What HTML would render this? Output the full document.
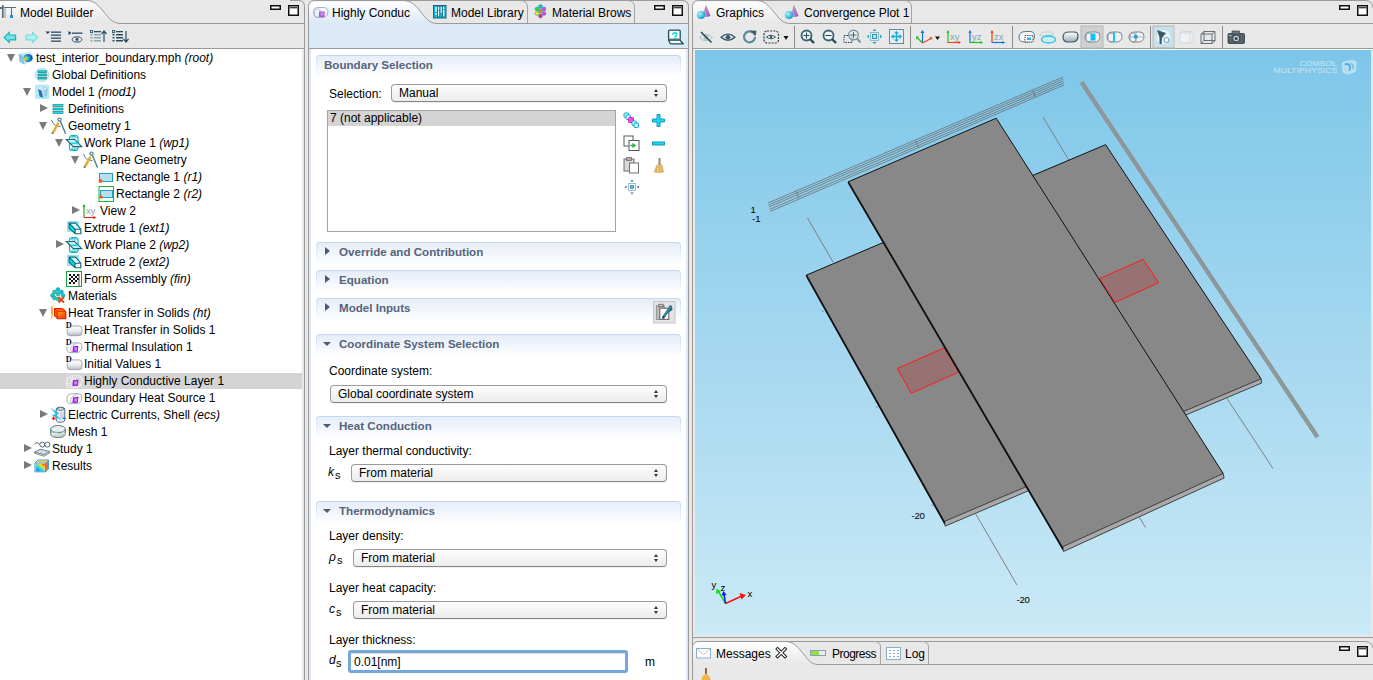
<!DOCTYPE html><html><head><meta charset="utf-8"><style>*{margin:0;padding:0;box-sizing:border-box}
html,body{width:1373px;height:680px;overflow:hidden;background:#e8e8e8;font-family:"Liberation Sans",sans-serif;font-size:12px;color:#000;position:relative}
.a{position:absolute}
svg.a{overflow:visible}
.t{position:absolute;white-space:pre;line-height:17px;font-size:12px}
.i{font-style:italic}
.line{position:absolute;background:#9a9a9a}
.tri-d{position:absolute;width:0;height:0;border-left:4.75px solid transparent;border-right:4.75px solid transparent;border-top:8px solid #7a7a7a}
.tri-r{position:absolute;width:0;height:0;border-top:4.6px solid transparent;border-bottom:4.6px solid transparent;border-left:8px solid #7a7a7a}
.sec{position:absolute;left:316px;width:365px;height:22px;border-radius:4px 4px 0 0;background:linear-gradient(#c3d6f2,rgba(200,218,244,0.6) 40%,rgba(255,255,255,0))}
.sec .in{position:absolute;left:1px;top:1px;right:1px;bottom:0;border-radius:3px 3px 0 0;background:linear-gradient(#e6edf8,#fdfeff)}
.sec .h{position:absolute;left:23px;top:1px;font-weight:bold;font-size:11.6px;color:#55647c;line-height:17px;white-space:pre}
.sec .ar{position:absolute;left:8.5px;top:5px;width:0;height:0;border-top:4.5px solid transparent;border-bottom:4.5px solid transparent;border-left:5px solid #4a5a70}
.sec .ad{position:absolute;left:6.5px;top:8px;width:0;height:0;border-left:4px solid transparent;border-right:4px solid transparent;border-top:4px solid #4a5a70}
.combo{position:absolute;height:18px;border:1px solid #9b9b9b;border-bottom-color:#858585;border-radius:4px;background:linear-gradient(#fdfdfd,#ececec);box-shadow:0 1px 0 rgba(0,0,0,0.06)}
.combo span{position:absolute;left:7px;top:0;line-height:16px;font-size:12px;white-space:pre}
.combo i{position:absolute;right:7px;top:3px;font-style:normal;width:5px;height:10px}
.combo i:before{content:"";position:absolute;left:0;top:1px;border-left:2.5px solid transparent;border-right:2.5px solid transparent;border-bottom:3px solid #333}
.combo i:after{content:"";position:absolute;left:0;top:6px;border-left:2.5px solid transparent;border-right:2.5px solid transparent;border-top:3px solid #333}
.lbl{position:absolute;white-space:pre;font-size:12px;line-height:17px}
.sym{position:absolute;font-style:italic;font-size:12px;line-height:17px;white-space:pre}
.t,.lbl,.sym{margin-top:1px}
</style></head><body>
<svg class="a" style="left:0px;top:0px" width="304" height="24" viewBox="0 0 304 24" ><defs><linearGradient id="gtab" x1="0" y1="0" x2="0" y2="1"><stop offset="0" stop-color="#fbfbfb"/><stop offset="1" stop-color="#e6e6e6"/></linearGradient></defs><path d="M0 1 H86 C94 1 97 4 103 11 C109 18 112 23 121 23 V24 H0Z" fill="url(#gtab)"/><rect x="121" y="1" width="177" height="22" fill="#e8e8e8"/><path d="M0 0.5 H86 C94 0.5 97 4 103 11 C109 18 112 23.5 121 23.5 H304" fill="none" stroke="#999" stroke-width="1"/></svg>
<svg class="a" style="left:0px;top:3px" width="19" height="17" viewBox="0 0 19 17" ><rect x="2" y="2" width="1.6" height="13" fill="#5a6a78"/><rect x="0" y="4" width="2" height="2" fill="#5a6a78"/><rect x="2" y="4" width="14" height="1" fill="#5a6a78"/><rect x="11" y="5" width="1" height="7" fill="#5a6a78"/><rect x="10" y="12" width="3" height="3" fill="#1890e0"/><rect x="4.5" y="4" width="1" height="11" fill="#8a9aa8"/></svg>
<div class="t" style="left:20px;top:4px">Model Builder</div>
<svg class="a" style="left:270px;top:5px" width="11" height="5" viewBox="0 0 11 5"><rect x="0.75" y="0.75" width="9.5" height="3.5" fill="#fff" stroke="#111" stroke-width="1.5"/></svg><svg class="a" style="left:288px;top:5px" width="11" height="11" viewBox="0 0 11 11"><rect x="0.75" y="0.75" width="9.5" height="9.5" fill="#fff" stroke="#111" stroke-width="1.5"/><rect x="2" y="2.2" width="7" height="1.1" fill="#111"/></svg>
<svg class="a" style="left:3px;top:31px" width="15" height="13" viewBox="0 0 15 13" ><path d="M1.2 6.4 L6.2 1.4 L6.2 4 L12.6 4 L12.6 8.8 L6.2 8.8 L6.2 11.4 Z" fill="#7ee0e0" stroke="#10b8b8" stroke-width="1.2"/></svg>
<svg class="a" style="left:25px;top:31px" width="15" height="13" viewBox="0 0 15 13" ><path d="M12.6 6.4 L7.6 1.4 L7.6 4 L1.2 4 L1.2 8.8 L7.6 8.8 L7.6 11.4 Z" fill="#b4eeee" stroke="#78dcdc" stroke-width="1.2"/></svg>
<svg class="a" style="left:45px;top:30px" width="18" height="14" viewBox="0 0 18 14" ><path d="M0.5 1.5 H5 L2.75 4Z" fill="#1a3a6a"/><g fill="#2a4a68"><rect x="6" y="1.5" width="10" height="1.3"/><rect x="6" y="4.5" width="10" height="1.3"/><rect x="6" y="7.5" width="10" height="1.3"/><rect x="6" y="10.5" width="10" height="1.3"/></g></svg>
<svg class="a" style="left:68px;top:30px" width="16" height="14" viewBox="0 0 16 14" ><path d="M0.5 1 V5 L3.5 3Z" fill="#1a3a6a"/><rect x="4" y="2.5" width="10.5" height="1.3" fill="#2a4a68"/><ellipse cx="9" cy="9.5" rx="4.8" ry="2.6" fill="none" stroke="#2a4a68" stroke-width="1"/><circle cx="9" cy="9.5" r="1.4" fill="#2a4a68"/></svg>
<svg class="a" style="left:90px;top:30px" width="18" height="14" viewBox="0 0 18 14" ><g fill="#2a5060"><rect x="0.5" y="0.5" width="2.2" height="2.2" fill="none" stroke="#2a5060" stroke-width="0.8"/><rect x="4" y="1" width="7" height="1.3"/></g><g fill="#8aa4b0"><rect x="0.5" y="4" width="2" height="1.5"/><rect x="4" y="4" width="7" height="1.5"/><rect x="0.5" y="7" width="2" height="1.5"/><rect x="4" y="7" width="7" height="1.5"/><rect x="0.5" y="10" width="2" height="1.5"/><rect x="4" y="10" width="7" height="1.5"/></g><path d="M14 12 V1.5 M11.5 4 L14 1 L16.5 4" stroke="#2a5060" stroke-width="1.2" fill="none"/></svg>
<svg class="a" style="left:112px;top:30px" width="18" height="14" viewBox="0 0 18 14" ><g fill="#2a4a60"><rect x="0.5" y="0.5" width="2.2" height="2.2" fill="none" stroke="#2a4a60" stroke-width="0.8"/><rect x="4" y="1" width="7" height="1.3"/><rect x="0.5" y="4" width="2" height="1.5"/><rect x="4" y="4" width="7" height="1.5"/><rect x="0.5" y="7" width="2" height="1.5"/><rect x="4" y="7" width="7" height="1.5"/><rect x="0.5" y="10" width="2" height="1.5"/><rect x="4" y="10" width="7" height="1.5"/></g><path d="M14 1 V11.5 M11.5 9 L14 12 L16.5 9" stroke="#2a4a60" stroke-width="1.2" fill="none"/></svg>
<div class="line" style="left:0;top:48px;width:304px;height:1px"></div>
<div class="a" style="left:0;top:49px;width:302px;height:631px;background:#fff"></div>
<div class="tri-d" style="left:7px;top:54px"></div>
<svg class="a" style="left:18px;top:49px" width="16" height="17" viewBox="0 0 16 17" ><defs><linearGradient id="r0gc0" x1="0" y1="0" x2="1" y2="1"><stop offset="0" stop-color="#9cd0ee"/><stop offset="0.5" stop-color="#e0f2fc"/><stop offset="1" stop-color="#7ac0ea"/></linearGradient><radialGradient id="r0gsw" cx="0.3" cy="0.55" r="0.7"><stop offset="0" stop-color="#f8d040"/><stop offset="0.3" stop-color="#40d080"/><stop offset="0.55" stop-color="#1890e0"/><stop offset="1" stop-color="#0a3aa0"/></radialGradient></defs>
<path d="M0.5 5.2 L13.5 2.2 L15.5 10.5 L6.5 15.5 L1.5 13 Z" fill="url(#r0gc0)"/><path d="M0.5 5.2 L5 7 L6.5 15.5 L1.5 13Z" fill="#6aaedc" opacity="0.7"/>
<ellipse cx="10" cy="9" rx="4.6" ry="4" fill="url(#r0gsw)"/><circle cx="6.5" cy="10.5" r="1.3" fill="#e8c840"/></svg>
<div class="t" style="left:36px;top:49px">test_interior_boundary.mph <span class="i">(root)</span></div>
<svg class="a" style="left:34px;top:66px" width="16" height="17" viewBox="0 0 16 17" ><circle cx="8" cy="8.8" r="6.8" fill="#c8ecec" stroke="#a8dcdc" stroke-width="0.8"/>
<rect x="4" y="4.8" width="8.5" height="1.8" fill="#00ecec" stroke="#206a70" stroke-width="0.6"/><rect x="4" y="8" width="8.5" height="1.8" fill="#00ecec" stroke="#206a70" stroke-width="0.6"/><rect x="4" y="11.2" width="8.5" height="1.8" fill="#00ecec" stroke="#206a70" stroke-width="0.6"/></svg>
<div class="t" style="left:52px;top:66px">Global Definitions</div>
<div class="tri-d" style="left:23px;top:88px"></div>
<svg class="a" style="left:34px;top:83px" width="16" height="17" viewBox="0 0 16 17" ><defs><linearGradient id="r2gm" x1="0" y1="0" x2="1" y2="0"><stop offset="0" stop-color="#f0f8fc"/><stop offset="1" stop-color="#88c4e4"/></linearGradient></defs>
<rect x="1" y="1.8" width="14.2" height="14.2" rx="1.5" fill="#b4eaf4"/><path d="M4 5.5 L9 3.8 L13.5 4.5 L13 13 L9 14.5 L5.5 14 Z" fill="url(#r2gm)"/><path d="M4 6 L7.5 7.5 L9 14.8 L5.5 13.5Z" fill="#1a78b8"/><path d="M7.5 7.5 L13.5 4.5" stroke="#d8f0fa" stroke-width="1"/></svg>
<div class="t" style="left:52px;top:83px">Model 1 <span class="i">(mod1)</span></div>
<div class="tri-r" style="left:40px;top:104px"></div>
<svg class="a" style="left:50px;top:100px" width="16" height="17" viewBox="0 0 16 17" ><rect x="3" y="4.6" width="10" height="2" fill="#00ecec" stroke="#206a70" stroke-width="0.6"/><rect x="3" y="8" width="10" height="2" fill="#00ecec" stroke="#206a70" stroke-width="0.6"/><rect x="3" y="11.4" width="10" height="2" fill="#00ecec" stroke="#206a70" stroke-width="0.6"/></svg>
<div class="t" style="left:68px;top:100px">Definitions</div>
<div class="tri-d" style="left:39px;top:122px"></div>
<svg class="a" style="left:50px;top:117px" width="16" height="17" viewBox="0 0 16 17" ><circle cx="9.5" cy="2.6" r="1.6" fill="none" stroke="#4f7e86" stroke-width="1.2"/><path d="M10.3 4 L15.6 16.8" stroke="#4f7e86" stroke-width="1.4" fill="none"/>
<path d="M1.6 2.8 Q3 9.5 10.5 9.6" stroke="#4f7e86" stroke-width="1" fill="none"/><path d="M2.6 16.4 L8.4 5.8" stroke="#f0b838" stroke-width="2.8"/><path d="M2.6 16.4 L8.4 5.8" stroke="#4f7e86" stroke-width="0.9" stroke-dasharray="0.8 2"/><path d="M2 17 L3 15" stroke="#4f7e86" stroke-width="1.3"/></svg>
<div class="t" style="left:68px;top:117px">Geometry 1</div>
<div class="tri-d" style="left:55px;top:139px"></div>
<svg class="a" style="left:66px;top:134px" width="16" height="17" viewBox="0 0 16 17" ><rect x="3.5" y="1.5" width="8.5" height="15" rx="2.5" fill="#fff" stroke="#10b4c4" stroke-width="1.2"/><ellipse cx="7.75" cy="3.2" rx="2.6" ry="0.9" fill="none" stroke="#10b4c4" stroke-width="0.9"/><ellipse cx="7.75" cy="14.8" rx="2.6" ry="0.9" fill="none" stroke="#10b4c4" stroke-width="0.9"/>
<path d="M0.3 5.5 L8.7 5.5 L15.8 12.6 L7.3 12.6 Z" fill="#c8f2f6" fill-opacity="0.85" stroke="#1a6a78" stroke-width="1.1"/><rect x="5" y="8.5" width="6" height="1.6" fill="#10d8e8"/></svg>
<div class="t" style="left:84px;top:134px">Work Plane 1 <span class="i">(wp1)</span></div>
<div class="tri-d" style="left:71px;top:156px"></div>
<svg class="a" style="left:82px;top:151px" width="16" height="17" viewBox="0 0 16 17" ><circle cx="9.5" cy="2.6" r="1.6" fill="none" stroke="#4f7e86" stroke-width="1.2"/><path d="M10.3 4 L15.6 16.8" stroke="#4f7e86" stroke-width="1.4" fill="none"/>
<path d="M1.6 2.8 Q3 9.5 10.5 9.6" stroke="#4f7e86" stroke-width="1" fill="none"/><path d="M2.6 16.4 L8.4 5.8" stroke="#f0b838" stroke-width="2.8"/><path d="M2.6 16.4 L8.4 5.8" stroke="#4f7e86" stroke-width="0.9" stroke-dasharray="0.8 2"/><path d="M2 17 L3 15" stroke="#4f7e86" stroke-width="1.3"/></svg>
<div class="t" style="left:100px;top:151px">Plane Geometry</div>
<svg class="a" style="left:98px;top:168px" width="16" height="17" viewBox="0 0 16 17" ><rect x="1.5" y="5.5" width="13" height="8" fill="#b8e0ec" stroke="#20a0c0" stroke-width="1"/><circle cx="2.5" cy="13" r="2" fill="#f06010"/></svg>
<div class="t" style="left:116px;top:168px">Rectangle 1 <span class="i">(r1)</span></div>
<svg class="a" style="left:98px;top:185px" width="16" height="17" viewBox="0 0 16 17" ><rect x="1" y="1.5" width="14.5" height="15" fill="none" stroke="#18b040" stroke-width="1"/><rect x="2.5" y="5.5" width="12" height="7" fill="#b8e0ec" stroke="#20a0c0" stroke-width="1"/><circle cx="3" cy="12" r="1.8" fill="#f06010"/></svg>
<div class="t" style="left:116px;top:185px">Rectangle 2 <span class="i">(r2)</span></div>
<div class="tri-r" style="left:72px;top:206px"></div>
<svg class="a" style="left:82px;top:202px" width="16" height="17" viewBox="0 0 16 17" ><path d="M2 15.5 V3" stroke="#20b020" stroke-width="1.2"/><path d="M0.5 5 L2 2 L3.5 5Z" fill="#20b020"/><path d="M2 15.5 H13" stroke="#e03010" stroke-width="1.2"/><path d="M11.5 14 L14.5 15.5 L11.5 17Z" fill="#e03010"/>
<text x="4" y="12" font-family="Liberation Sans" font-size="9.5" fill="#90a0a8">xy</text></svg>
<div class="t" style="left:100px;top:202px">View 2</div>
<svg class="a" style="left:66px;top:219px" width="16" height="17" viewBox="0 0 16 17" ><rect x="1" y="2" width="12" height="11" fill="#9ce2ec"/><path d="M3.2 4.1 L9.6 4.1 L14.8 10.2 L9.1 10.2 Z" fill="#d8f8fc"/><path d="M3.2 4.1 L9.1 10.2 L9.1 14.7 L3.2 9.4 Z" fill="#10d4e0"/><rect x="9.1" y="10.2" width="5.7" height="4.5" fill="#fff"/>
<path d="M3.2 4.1 H9.6 L14.8 10.2 V14.7 H9.1 L3.2 9.4 Z M3.2 4.1 L9.1 10.2 H14.8 M9.1 10.2 V14.7" fill="none" stroke="#0a6a78" stroke-width="1.1" stroke-linejoin="round"/></svg>
<div class="t" style="left:84px;top:219px">Extrude 1 <span class="i">(ext1)</span></div>
<div class="tri-r" style="left:56px;top:240px"></div>
<svg class="a" style="left:66px;top:236px" width="16" height="17" viewBox="0 0 16 17" ><rect x="3.5" y="1.5" width="8.5" height="15" rx="2.5" fill="#fff" stroke="#10b4c4" stroke-width="1.2"/><ellipse cx="7.75" cy="3.2" rx="2.6" ry="0.9" fill="none" stroke="#10b4c4" stroke-width="0.9"/><ellipse cx="7.75" cy="14.8" rx="2.6" ry="0.9" fill="none" stroke="#10b4c4" stroke-width="0.9"/>
<path d="M0.3 5.5 L8.7 5.5 L15.8 12.6 L7.3 12.6 Z" fill="#c8f2f6" fill-opacity="0.85" stroke="#1a6a78" stroke-width="1.1"/><rect x="5" y="8.5" width="6" height="1.6" fill="#10d8e8"/></svg>
<div class="t" style="left:84px;top:236px">Work Plane 2 <span class="i">(wp2)</span></div>
<svg class="a" style="left:66px;top:253px" width="16" height="17" viewBox="0 0 16 17" ><rect x="1" y="2" width="12" height="11" fill="#9ce2ec"/><path d="M3.2 4.1 L9.6 4.1 L14.8 10.2 L9.1 10.2 Z" fill="#d8f8fc"/><path d="M3.2 4.1 L9.1 10.2 L9.1 14.7 L3.2 9.4 Z" fill="#10d4e0"/><rect x="9.1" y="10.2" width="5.7" height="4.5" fill="#fff"/>
<path d="M3.2 4.1 H9.6 L14.8 10.2 V14.7 H9.1 L3.2 9.4 Z M3.2 4.1 L9.1 10.2 H14.8 M9.1 10.2 V14.7" fill="none" stroke="#0a6a78" stroke-width="1.1" stroke-linejoin="round"/></svg>
<div class="t" style="left:84px;top:253px">Extrude 2 <span class="i">(ext2)</span></div>
<svg class="a" style="left:66px;top:270px" width="16" height="17" viewBox="0 0 16 17" ><rect x="0.5" y="1.5" width="15" height="15" fill="#fff" stroke="#18a040" stroke-width="1"/>
<path d="M3 4 h2v2h-2z M7 4h2v2h-2z M11 4h2v2h-2z M5 6h2v2h-2z M9 6h2v2h-2z M3 8h2v2h-2z M7 8h2v2h-2z M11 8h2v2h-2z M5 10h2v2h-2z M9 10h2v2h-2z M3 12h2v2h-2z M7 12h2v2h-2z" fill="#111"/><path d="M13 4 V16" stroke="#555" stroke-width="1"/></svg>
<div class="t" style="left:84px;top:270px">Form Assembly <span class="i">(fin)</span></div>
<svg class="a" style="left:50px;top:287px" width="16" height="17" viewBox="0 0 16 17" ><g fill="#10c0d8" stroke="#0a8aa0" stroke-width="0.4"><circle cx="8" cy="2.5" r="2"/><circle cx="4.5" cy="5" r="2"/><circle cx="11.5" cy="5" r="2"/><circle cx="2.5" cy="8.5" r="2"/><circle cx="8" cy="7" r="2"/><circle cx="13" cy="8.5" r="2"/><circle cx="4.5" cy="11" r="2"/><circle cx="8" cy="12" r="2"/></g>
<g fill="#30e040"><circle cx="4.5" cy="5" r="0.9"/><circle cx="8" cy="7" r="0.9"/><circle cx="4.5" cy="11" r="0.9"/><circle cx="8" cy="12" r="0.9"/></g><path d="M8.5 10 L14 15.5 M14 10 L8.5 15.5" stroke="#f04010" stroke-width="1.8"/></svg>
<div class="t" style="left:68px;top:287px">Materials</div>
<div class="tri-d" style="left:39px;top:309px"></div>
<svg class="a" style="left:50px;top:304px" width="16" height="17" viewBox="0 0 16 17" ><defs><linearGradient id="r15gh" x1="0" y1="0" x2="1" y2="1"><stop offset="0" stop-color="#ffa020"/><stop offset="1" stop-color="#f03000"/></linearGradient></defs>
<path d="M2.6 0.8 Q0.2 4 1 8 Q2.2 11 1.2 13.5 Q0.8 15 0.2 16.6 Q3.2 13.5 3 9.5 Q2.8 6 2.6 0.8Z" fill="#ffa010"/>
<path d="M4 4 L12.7 4 L16 7.2 L16 14.8 L7.2 14.8 L4 11.8Z" fill="#e81800"/><path d="M5.5 5 L12.3 5 L15 7.3 L7.5 7.3Z" fill="#ff7a10"/><path d="M5 5.5 L7.2 7.3 L7.2 13.5 L5 11.5Z" fill="#ff5a00"/>
<rect x="7.2" y="7.2" width="8.8" height="7.6" fill="url(#r15gh)"/><path d="M7.2 7.2 H16 V14.8 H7.2Z" fill="none" stroke="#e01000" stroke-width="0.8"/></svg>
<div class="t" style="left:68px;top:304px">Heat Transfer in Solids <span class="i">(ht)</span></div>
<svg class="a" style="left:66px;top:321px" width="16" height="17" viewBox="0 0 16 17" ><defs><linearGradient id="r16gp" x1="0" y1="0" x2="0" y2="1"><stop offset="0" stop-color="#fdfdfe"/><stop offset="0.5" stop-color="#eceef2"/><stop offset="1" stop-color="#b4b8c4"/></linearGradient></defs>
<path d="M6 4.9 H13 Q16 4.9 16 8.2 V11.6 Q16 14.7 13 14.7 H4.2 Q1.2 14.7 1.2 11.6 V7.6" fill="url(#r16gp)" stroke="#9ca0ac" stroke-width="0.9"/>
<text x="-0.3" y="7.2" font-family="Liberation Serif" font-weight="bold" font-size="8.4" fill="#0a1448">D</text></svg>
<div class="t" style="left:84px;top:321px">Heat Transfer in Solids 1</div>
<svg class="a" style="left:66px;top:338px" width="16" height="17" viewBox="0 0 16 17" ><path d="M4.5 14.6 Q0.8 14.6 0.8 10.2 Q0.8 8.5 1.5 7.5 M6 4.9 H12.5 Q16 4.9 16 8.2 Q16 12.8 12.5 14.6 L4.5 14.6" fill="#fff" stroke="#9ca0ac" stroke-width="0.9"/>
<path d="M6 14.5 Q3 11.5 6.5 7.5 Q8 6.2 10.5 5.5" fill="none" stroke="#a4a8b4" stroke-width="0.8"/>
<path d="M7 8.2 L12.3 7.8 L12 13.7 L6.4 13.9 Z" fill="#a020e0"/><rect x="8.3" y="9.3" width="2.8" height="3.2" fill="#c890ec"/>
<text x="-0.3" y="7.2" font-family="Liberation Serif" font-weight="bold" font-size="8.4" fill="#0a1448">D</text></svg>
<div class="t" style="left:84px;top:338px">Thermal Insulation 1</div>
<svg class="a" style="left:66px;top:355px" width="16" height="17" viewBox="0 0 16 17" ><defs><linearGradient id="r18gp" x1="0" y1="0" x2="0" y2="1"><stop offset="0" stop-color="#fdfdfe"/><stop offset="0.5" stop-color="#eceef2"/><stop offset="1" stop-color="#b4b8c4"/></linearGradient></defs>
<path d="M6 4.9 H13 Q16 4.9 16 8.2 V11.6 Q16 14.7 13 14.7 H4.2 Q1.2 14.7 1.2 11.6 V7.6" fill="url(#r18gp)" stroke="#9ca0ac" stroke-width="0.9"/>
<text x="-0.3" y="7.2" font-family="Liberation Serif" font-weight="bold" font-size="8.4" fill="#0a1448">D</text></svg>
<div class="t" style="left:84px;top:355px">Initial Values 1</div>
<div class="a" style="left:0;top:373px;width:302px;height:16px;background:#d4d4d4"></div>
<svg class="a" style="left:66px;top:372px" width="16" height="17" viewBox="0 0 16 17" ><path d="M4.5 14.6 Q0.8 14.6 0.8 10.2 Q0.8 4.4 6.5 4.4 H12.5 Q16 4.4 16 8.2 Q16 12.8 12.5 14.6 Z" fill="none" stroke="#fff" stroke-width="1.8"/>
<path d="M4.5 14.6 Q0.8 14.6 0.8 10.2 Q0.8 4.4 6.5 4.4 H12.5 Q16 4.4 16 8.2 Q16 12.8 12.5 14.6 Z" fill="none" stroke="#a8acb8" stroke-width="0.8" stroke-dasharray="1.2 0.8"/>
<path d="M6 14.5 Q2.5 11.5 6 7.5 Q8 6 10.5 5.5" fill="none" stroke="#fff" stroke-width="1.6"/><path d="M6 14.5 Q2.5 11.5 6 7.5 Q8 6 10.5 5.5" fill="none" stroke="#a8acb8" stroke-width="0.7" stroke-dasharray="1.2 0.8"/>
<path d="M7 8.2 L12.3 7.8 L12 13.7 L6.4 13.9 Z" fill="#a020e0"/><rect x="8.3" y="9.3" width="2.8" height="3.2" fill="#c890ec"/></svg>
<div class="t" style="left:84px;top:372px">Highly Conductive Layer 1</div>
<svg class="a" style="left:66px;top:389px" width="16" height="17" viewBox="0 0 16 17" ><path d="M4.5 14.6 Q0.8 14.6 0.8 10.2 Q0.8 4.7 6.5 4.7 H12.5 Q16 4.7 16 8.2 Q16 12.8 12.5 14.6 Z" fill="#fff" stroke="#9ca0ac" stroke-width="0.9"/>
<path d="M6 14.5 Q3 11.5 6.5 7.5 Q8 6.2 10.5 5.5" fill="none" stroke="#a4a8b4" stroke-width="0.8"/><path d="M12.5 4.8 Q10.5 6.5 12 8.5 Q14 9 16 8" fill="none" stroke="#b4b8c4" stroke-width="0.6"/>
<path d="M7 8.2 L12.3 7.8 L12 13.7 L6.4 13.9 Z" fill="#a020e0"/><rect x="8.3" y="9.3" width="2.8" height="3.2" fill="#c890ec"/></svg>
<div class="t" style="left:84px;top:389px">Boundary Heat Source 1</div>
<div class="tri-r" style="left:40px;top:410px"></div>
<svg class="a" style="left:50px;top:406px" width="16" height="17" viewBox="0 0 16 17" ><path d="M6.2 3 Q6.2 1.2 10.5 1.2 Q14.8 1.2 14.8 3 L14.8 14 Q14.8 16.2 10.5 16.2 Q6.2 16.2 6.2 14Z" fill="#eef0f6" stroke="#4a6a7a" stroke-width="1"/><ellipse cx="10.5" cy="3" rx="3.6" ry="1.4" fill="#dfe6ee" stroke="#4a6a7a" stroke-width="0.9"/><rect x="10" y="6" width="4" height="7" fill="#c8c0e0" opacity="0.6"/>
<path d="M0.3 1.8 L9.5 7.6 L5.8 8.4 L12.2 14.6 L1.5 9 L5.8 8 Z" fill="#10c4f4"/><path d="M1.8 12.4 h3.6 M3.6 10.6 v3.6" stroke="#ff1010" stroke-width="1.4"/><path d="M12.8 12.4 h3" stroke="#1a60e0" stroke-width="1.2"/></svg>
<div class="t" style="left:68px;top:406px">Electric Currents, Shell <span class="i">(ecs)</span></div>
<svg class="a" style="left:50px;top:423px" width="16" height="17" viewBox="0 0 16 17" ><path d="M0.6 6 V10.5 Q0.6 14.6 8 14.6 Q15.4 14.6 15.4 10.5 V6" fill="#b8cccc" stroke="#5a7c84" stroke-width="0.9"/><ellipse cx="8" cy="6" rx="7.4" ry="3.6" fill="#d8e6e6" stroke="#5a7c84" stroke-width="0.9"/>
<path d="M2 5 L5 7.5 L8 4 L11 7.5 L14 5 M3 8.5 L6 5 M10 5 L13 8.5 M1.5 10 L4 12.5 L7 9.5 L10 12.5 L13 9.5 L15 11.5 M2.5 12.5 L5 9.5 M8 13.5 L5.5 10.5" stroke="#fff" stroke-width="0.8" fill="none"/></svg>
<div class="t" style="left:68px;top:423px">Mesh 1</div>
<div class="tri-r" style="left:24px;top:444px"></div>
<svg class="a" style="left:34px;top:440px" width="16" height="17" viewBox="0 0 16 17" ><path d="M0.5 4.2 Q2 1.6 4 3 Q5 3.8 5.8 4.4" stroke="#405868" stroke-width="0.9" fill="none"/><circle cx="8.3" cy="4.6" r="2.5" fill="#fff" stroke="#405868" stroke-width="0.9"/><circle cx="13.4" cy="4.6" r="2.5" fill="#fff" stroke="#405868" stroke-width="0.9"/>
<path d="M0.6 12 L6 9.2 L15.8 11.4 L10 14.6Z" fill="#e4eaee" stroke="#506878" stroke-width="0.8"/><path d="M0.6 12 V13.2 L10 16.2 L15.8 12.8 V11.4" fill="none" stroke="#506878" stroke-width="0.8"/><path d="M3 11.6 L7 10 M6 12.8 L9.5 11 M9.5 13.4 L13 11.8" stroke="#9aaab4" stroke-width="0.6"/></svg>
<div class="t" style="left:52px;top:440px">Study 1</div>
<div class="tri-r" style="left:24px;top:461px"></div>
<svg class="a" style="left:34px;top:457px" width="16" height="17" viewBox="0 0 16 17" ><defs><linearGradient id="r24gr" x1="0" y1="1" x2="1" y2="0"><stop offset="0" stop-color="#1060f0"/><stop offset="0.35" stop-color="#10d8f0"/><stop offset="0.7" stop-color="#f8e020"/><stop offset="1" stop-color="#f02000"/></linearGradient></defs>
<path d="M1 6 L3.8 3 L14.4 3 L14.4 12 L11.6 14.8 L1 14.8Z" fill="#f4fbff" stroke="#1a88d0" stroke-width="0.9"/><path d="M1 6 H11.6 L14.4 3 M11.6 6 V14.8" fill="none" stroke="#1a88d0" stroke-width="0.9"/><rect x="2.2" y="7" width="8.6" height="7" fill="url(#r24gr)"/><path d="M4.5 3.8 H13.5 L11.2 5.4 H2.8Z" fill="#f8c020"/><path d="M12.2 6.2 L13.8 4.2 V11.8 L12.2 13.6Z" fill="#f04010"/></svg>
<div class="t" style="left:52px;top:457px">Results</div>
<div class="line" style="left:304px;top:7px;width:1px;height:673px"></div>
<svg class="a" style="left:290px;top:0px" width="16" height="9" viewBox="290 0 16 9"><path d="M290 0.5 H298.5 Q304.5 0.5 304.5 6.5 V9" fill="none" stroke="#9a9a9a" stroke-width="1"/></svg>
<div class="line" style="left:308px;top:9px;width:1px;height:671px"></div>
<!-- ================= MIDDLE ================= -->
<svg class="a" style="left:304px;top:0" width="389" height="49" viewBox="304 0 389 49">
<defs><linearGradient id="mtab" gradientUnits="userSpaceOnUse" x1="0" y1="2" x2="0" y2="23"><stop offset="0" stop-color="#ffffff"/><stop offset="1" stop-color="#dce9f7"/></linearGradient></defs>
<path d="M308.5 49 V7 Q308.5 1.5 314 1.5 H403 C411 1.5 414 4 420 11 C426 18 429 23 437 23 H688.5 V49 Z" fill="#e8e8e8"/>
<path d="M308.5 49 V7 Q308.5 1.5 314 1.5 H403 C411 1.5 414 4 420 11 C426 18 429 23.5 437 23.5 H688 V49 H309Z" fill="none"/>
<path d="M309 49 V7 Q309 1.5 314 1.5 H403 C411 1.5 414 4 420 11 C426 18 429 23.5 437 23.5 H688 V49 Z" fill="url(#mtab)"/>
<rect x="309" y="24" width="379" height="24" fill="#dce9f7"/>
<path d="M308.5 49 V6.5 Q308.5 0.5 314.5 0.5 H403 C411 0.5 414 4 420 11 C426 18 429 23.5 437 23.5 H688.5" fill="none" stroke="#9a9a9a" stroke-width="1"/><path d="M403 0.5 H682" fill="none" stroke="#9a9a9a" stroke-width="1"/>
<path d="M520 0.5 Q527.5 0.5 527.5 7 V23" fill="none" stroke="#a4a4a4" stroke-width="1"/>
<path d="M627 0.5 Q634.5 0.5 634.5 7 V23" fill="none" stroke="#a4a4a4" stroke-width="1"/>
<path d="M682 0.5 Q688.5 0.5 688.5 6.5 V49" fill="none" stroke="#9a9a9a" stroke-width="1"/>
<rect x="309" y="48" width="379" height="1" fill="#9a9a9a"/>
</svg>
<!-- tab icon pill purple -->
<svg class="a" style="left:312px;top:5px" width="17" height="15" viewBox="0 0 17 15">
<path d="M1.5 7.5 Q1.5 2.5 6 2.5 L11.5 2.5 Q16 2.5 16 6.5 Q16 11 12 12.5 L5.5 12.5 Q1.5 12.5 1.5 7.5Z" fill="none" stroke="#a8acb8" stroke-width="0.9"/><ellipse cx="5.5" cy="8" rx="3" ry="4.2" fill="none" stroke="#a8acb8" stroke-width="0.7"/>
<rect x="7" y="6.5" width="5.5" height="5.5" fill="#b050e0"/><rect x="8.5" y="7.5" width="3" height="3" fill="#c890f0"/></svg>
<div class="t" style="left:332px;top:4px">Highly Conduc</div>
<!-- model library icon -->
<svg class="a" style="left:433px;top:5px" width="14" height="14" viewBox="0 0 14 14"><rect x="0.5" y="0.5" width="12.5" height="12.5" fill="#18b8d8" stroke="#20607a" stroke-width="1"/><g fill="#fff"><rect x="2.5" y="2" width="1.2" height="5"/><rect x="2.5" y="8" width="1.2" height="2"/><rect x="5" y="2" width="1.2" height="3"/><rect x="5" y="6" width="1.2" height="5"/><rect x="7.5" y="2" width="1.2" height="6"/><rect x="10" y="2" width="1.2" height="2"/><rect x="10" y="5" width="1.2" height="6"/></g><g fill="#20607a"><rect x="4" y="1" width="0.8" height="12"/><rect x="6.5" y="1" width="0.8" height="12"/><rect x="9" y="1" width="0.8" height="12"/></g></svg>
<div class="t" style="left:451px;top:4px">Model Library</div>
<!-- material browser icon -->
<svg class="a" style="left:533px;top:4px" width="15" height="15" viewBox="0 0 15 15"><g stroke="#0a8aa0" stroke-width="0.4"><circle cx="7.5" cy="2.5" r="2" fill="#10c0d8"/><circle cx="4" cy="5" r="2" fill="#30d040"/><circle cx="11" cy="5" r="2" fill="#e040e0"/><circle cx="7.5" cy="7" r="2" fill="#f08020"/><circle cx="4" cy="9.5" r="2" fill="#f0e020"/><circle cx="11" cy="9.5" r="2" fill="#e040e0"/><circle cx="7.5" cy="12" r="2" fill="#f02080"/></g></svg>
<div class="t" style="left:552px;top:4px">Material Brows</div>
<svg class="a" style="left:654px;top:5px" width="11" height="5" viewBox="0 0 11 5"><rect x="0.75" y="0.75" width="9.5" height="3.5" fill="#fff" stroke="#111" stroke-width="1.5"/></svg><svg class="a" style="left:672px;top:5px" width="11" height="11" viewBox="0 0 11 11"><rect x="0.75" y="0.75" width="9.5" height="9.5" fill="#fff" stroke="#111" stroke-width="1.5"/><rect x="2" y="2.2" width="7" height="1.1" fill="#111"/></svg>
<!-- help icon -->
<svg class="a" style="left:667px;top:29px" width="17" height="16" viewBox="0 0 17 16"><rect x="1.6" y="1.2" width="11.6" height="9.6" rx="1" fill="#fff" stroke="#1e4e5e" stroke-width="1.3"/><rect x="2.5" y="9" width="10" height="1.5" fill="#a8b8c0"/><path d="M1.6 11.2 L13 11.2 L16.2 14.8 L3.4 14.8Z" fill="#f4f8fa" stroke="#1e4e5e" stroke-width="1.3" stroke-linejoin="round"/><path d="M5.8 5.8 Q5.9 3.9 7.7 3.9 Q9.6 3.9 9.6 5.5 Q9.6 6.7 8.2 7.3 L8.2 8.2" fill="none" stroke="#10dcd8" stroke-width="1.6"/><rect x="7.3" y="8.6" width="1.8" height="1.4" fill="#10dcd8"/></svg>
<!-- content -->
<div class="a" style="left:309px;top:49px;width:2px;height:631px;background:#dde9f7"></div>
<div class="a" style="left:311px;top:49px;width:375px;height:631px;background:#fff"></div>
<div class="a" style="left:686px;top:49px;width:2px;height:631px;background:#dde9f7"></div>

<!-- section: Boundary Selection -->
<div class="sec" style="top:55px"><div class="in"></div><div class="h" style="left:8px">Boundary Selection</div></div>
<div class="lbl" style="left:329px;top:85px">Selection:</div>
<div class="combo" style="left:391px;top:84px;width:276px"><span>Manual</span><i></i></div>
<div class="a" style="left:327px;top:110px;width:289px;height:122px;border:1px solid #a4a4a4;background:#fff"></div>
<div class="a" style="left:328px;top:111px;width:287px;height:15px;background:#d4d4d4"></div>
<div class="lbl" style="left:330px;top:109px">7 (not applicable)</div>
<!-- selection icons -->
<svg class="a" style="left:623px;top:112px" width="18" height="17" viewBox="0 0 18 17"><rect x="1" y="1" width="4.5" height="4.5" rx="1" fill="#c8f4fc" stroke="#10a8c8" stroke-width="1"/><rect x="3" y="3" width="4.5" height="4.5" rx="1" fill="#e0f8fc" stroke="#10a8c8" stroke-width="1"/><rect x="5.5" y="5.5" width="5" height="5" rx="1" fill="#f050e0" stroke="#d020c0" stroke-width="1"/><rect x="9" y="9" width="4.5" height="4.5" rx="1" fill="#e0f8fc" stroke="#10a8c8" stroke-width="1"/><rect x="11" y="11" width="4.5" height="4.5" rx="1" fill="#c8f4fc" stroke="#10a8c8" stroke-width="1"/></svg>
<svg class="a" style="left:651px;top:113px" width="16" height="16" viewBox="0 0 16 16"><path d="M6 1.5 H9 V6 H13.5 V9 H9 V13.5 H6 V9 H1.5 V6 H6Z" fill="#18d8f0" stroke="#0a90b0" stroke-width="0.9"/></svg>
<svg class="a" style="left:623px;top:135px" width="18" height="17" viewBox="0 0 18 17"><rect x="1" y="1" width="9" height="10" fill="#fff" stroke="#505a60" stroke-width="1"/><rect x="6" y="5.5" width="10" height="10" fill="#fff" stroke="#505a60" stroke-width="1"/><path d="M7.5 10.5 H11 M9.5 8.5 L12 10.5 L9.5 12.5" stroke="#20b040" stroke-width="1.3" fill="none"/></svg>
<svg class="a" style="left:651px;top:141px" width="16" height="6" viewBox="0 0 16 6"><rect x="1.5" y="1" width="12" height="3" fill="#18d8f0" stroke="#0a90b0" stroke-width="0.9"/></svg>
<svg class="a" style="left:623px;top:157px" width="18" height="17" viewBox="0 0 18 17"><rect x="1" y="2" width="10" height="12" fill="#d8d8d8" stroke="#707070" stroke-width="1"/><rect x="3.5" y="0.5" width="5" height="3" fill="#b0b0b0" stroke="#707070" stroke-width="0.8"/><rect x="6.5" y="6" width="9" height="10" fill="#fff" stroke="#707070" stroke-width="1"/></svg>
<svg class="a" style="left:651px;top:157px" width="16" height="17" viewBox="0 0 16 17"><rect x="7.5" y="1" width="2" height="6.5" fill="#9a8870"/><rect x="7" y="7" width="3" height="1" fill="#d06040"/><path d="M6 8 Q8.5 7 11 8 L12.5 15 Q8 16 3 15Z" fill="#f0c880" stroke="#c89850" stroke-width="0.6"/><path d="M7 9 L5 15 M8.5 9 V15 M10 9 L11 15" stroke="#c89850" stroke-width="0.6"/></svg>
<svg class="a" style="left:624px;top:179px" width="17" height="16" viewBox="0 0 17 16"><rect x="4.5" y="4.5" width="7" height="7" fill="none" stroke="#2a6a9a" stroke-width="0.9" stroke-dasharray="1 1"/><rect x="6.5" y="6.5" width="3" height="3" fill="#40c0f0" stroke="#2a6a9a" stroke-width="0.6"/><path d="M8 0.5 L6.5 2.5 H9.5Z M8 15.5 L6.5 13.5 H9.5Z M0.5 8 L2.5 6.5 V9.5Z M15.5 8 L13.5 6.5 V9.5Z" fill="#2a6a9a"/></svg>

<!-- collapsed sections -->
<div class="sec" style="top:242px"><div class="in"></div><div class="ar"></div><div class="h">Override and Contribution</div></div>
<div class="sec" style="top:270px"><div class="in"></div><div class="ar"></div><div class="h">Equation</div></div>
<div class="sec" style="top:298px"><div class="in"></div><div class="ar"></div><div class="h">Model Inputs</div></div>
<svg class="a" style="left:653px;top:301px" width="23" height="23" viewBox="0 0 23 23"><rect x="0.5" y="0.5" width="21.5" height="21.5" fill="#e4e4e4" stroke="#c4c4c4" stroke-width="1"/><rect x="3.3" y="4.8" width="8" height="13.5" fill="#bcbcbc" stroke="#8a8a8a" stroke-width="0.9"/><rect x="5.8" y="3.3" width="4.5" height="2.2" fill="#d0d0d0" stroke="#707070" stroke-width="0.9"/><rect x="6.8" y="7.2" width="9" height="11.2" fill="#fff" stroke="#6a6a6a" stroke-width="1.1"/><path d="M10.2 16.8 L18.2 4.6" stroke="#1a7282" stroke-width="2.6"/><path d="M13 13 L19 5.5 L19.5 9 Z" fill="#1a7282"/><path d="M11 15.5 L17.5 6" stroke="#e8f4f6" stroke-width="0.6" stroke-dasharray="1 1"/><path d="M9.6 17.6 L10.8 15.4" stroke="#0a3a44" stroke-width="1.6"/></svg>

<!-- Coordinate System Selection -->
<div class="sec" style="top:334px"><div class="in"></div><div class="ad"></div><div class="h">Coordinate System Selection</div></div>
<div class="lbl" style="left:329px;top:362px">Coordinate system:</div>
<div class="combo" style="left:330px;top:385px;width:337px"><span>Global coordinate system</span><i></i></div>

<!-- Heat Conduction -->
<div class="sec" style="top:416px"><div class="in"></div><div class="ad"></div><div class="h">Heat Conduction</div></div>
<div class="lbl" style="left:329px;top:442px">Layer thermal conductivity:</div>
<div class="sym" style="left:328px;top:463px">k</div><div class="lbl" style="left:335px;top:466px;font-size:11px">s</div>
<div class="combo" style="left:351px;top:464px;width:316px"><span>From material</span><i></i></div>

<!-- Thermodynamics -->
<div class="sec" style="top:501px"><div class="in"></div><div class="ad"></div><div class="h">Thermodynamics</div></div>
<div class="lbl" style="left:329px;top:527px">Layer density:</div>
<div class="sym" style="left:329px;top:548px">ρ</div><div class="lbl" style="left:337px;top:551px;font-size:11px">s</div>
<div class="combo" style="left:353px;top:549px;width:314px"><span>From material</span><i></i></div>
<div class="lbl" style="left:329px;top:579px">Layer heat capacity:</div>
<div class="sym" style="left:329px;top:600px">c</div><div class="lbl" style="left:336px;top:603px;font-size:11px">s</div>
<div class="combo" style="left:353px;top:601px;width:314px"><span>From material</span><i></i></div>
<div class="lbl" style="left:329px;top:631px">Layer thickness:</div>
<div class="sym" style="left:329px;top:651px">d</div><div class="lbl" style="left:336px;top:654px;font-size:11px">s</div>
<div class="a" style="left:348px;top:650px;width:280px;height:23px;border-radius:3px;background:#72a8dc"></div>
<div class="a" style="left:351px;top:653px;width:274px;height:17px;background:#fff;box-shadow:inset 0 1px 1px rgba(0,0,0,.15)"></div>
<div class="lbl" style="left:354px;top:653px">0.01[nm]</div>
<div class="lbl" style="left:645px;top:653px">m</div>

<!-- ================= RIGHT ================= -->
<div class="line" style="left:688px;top:7px;width:1px;height:673px"></div>
<div class="line" style="left:692px;top:7px;width:1px;height:673px"></div>
<svg class="a" style="left:688px;top:0" width="685" height="49" viewBox="688 0 685 49">
<defs><linearGradient id="rtab" gradientUnits="userSpaceOnUse" x1="0" y1="2" x2="0" y2="23"><stop offset="0" stop-color="#fdfdfd"/><stop offset="1" stop-color="#e8e8e8"/></linearGradient></defs>
<path d="M692.5 49 V7 Q692.5 1.5 698 1.5 H756 C764 1.5 767 4 773 11 C779 18 782 23 790 23 H1373 V49Z" fill="url(#rtab)"/>
<path d="M692.5 49 V6.5 Q692.5 0.5 698.5 0.5 H756 C764 0.5 767 4 773 11 C779 18 782 23.5 790 23.5 H1373" fill="none" stroke="#9a9a9a" stroke-width="1"/><path d="M756 0.5 H1365" fill="none" stroke="#9a9a9a" stroke-width="1"/>
<path d="M904 0.5 Q911.5 0.5 911.5 7 V23" fill="none" stroke="#a4a4a4" stroke-width="1"/>
<path d="M1365 0.5 Q1372.5 0.5 1373 8" fill="none" stroke="#9a9a9a" stroke-width="1"/>
<rect x="693" y="48" width="680" height="1" fill="#9a9a9a"/>
</svg>
<!-- graphics tab icons -->
<svg class="a" style="left:696px;top:4px" width="16" height="16" viewBox="0 0 16 16"><defs><radialGradient id="sph" cx="0.35" cy="0.35" r="0.7"><stop offset="0" stop-color="#b0f4ff"/><stop offset="1" stop-color="#0aa0c8"/></radialGradient><linearGradient id="cone" x1="0" y1="0" x2="1" y2="0"><stop offset="0" stop-color="#e0b0e8"/><stop offset="1" stop-color="#9050a8"/></linearGradient></defs><path d="M10 1 L6 12 Q10 14 14.5 12Z" fill="url(#cone)"/><circle cx="5" cy="11" r="4" fill="url(#sph)"/></svg>
<div class="t" style="left:716px;top:4px">Graphics</div>
<svg class="a" style="left:784px;top:4px" width="16" height="16" viewBox="0 0 16 16"><path d="M10 1 L6 12 Q10 14 14.5 12Z" fill="url(#cone)"/><circle cx="5" cy="11" r="4" fill="url(#sph)"/></svg>
<div class="t" style="left:804px;top:4px">Convergence Plot 1</div>
<svg class="a" style="left:1339px;top:5px" width="11" height="5" viewBox="0 0 11 5"><rect x="0.75" y="0.75" width="9.5" height="3.5" fill="#fff" stroke="#111" stroke-width="1.5"/></svg><svg class="a" style="left:1357px;top:5px" width="11" height="11" viewBox="0 0 11 11"><rect x="0.75" y="0.75" width="9.5" height="9.5" fill="#fff" stroke="#111" stroke-width="1.5"/><rect x="2" y="2.2" width="7" height="1.1" fill="#111"/></svg>

<!-- graphics toolbar -->
<svg class="a" style="left:693px;top:24px" width="680" height="24" viewBox="693 24 680 24">
<defs>
<linearGradient id="eyeg" x1="0" y1="0" x2="0" y2="1"><stop offset="0" stop-color="#fff"/><stop offset="1" stop-color="#9ab0b8"/></linearGradient>
</defs>
<!-- separators -->
<rect x="794" y="26" width="1" height="22" fill="#8a8a8a"/><rect x="910" y="26" width="1" height="22" fill="#8a8a8a"/><rect x="1012" y="26" width="1" height="22" fill="#8a8a8a"/><rect x="1150" y="26" width="1" height="22" fill="#8a8a8a"/><rect x="1222" y="26" width="1" height="22" fill="#8a8a8a"/>
<!-- pressed buttons -->
<rect x="1081" y="26" width="22" height="22" fill="#d0d0d0" stroke="#b8b8b8" stroke-width="1"/>
<rect x="1153" y="26" width="21" height="22" fill="#d0d0d0" stroke="#b8b8b8" stroke-width="1"/>
<!-- 1 hide -->
<path d="M699.5 37.5 Q706 31 712.5 37.5 Q706 44 699.5 37.5Z" fill="#e0ecf0" stroke="#a8c0c8" stroke-width="1"/><ellipse cx="706" cy="37.5" rx="2.5" ry="2.5" fill="#a8bcc4"/><path d="M701 32 L711.5 42.5" stroke="#2a4048" stroke-width="1.4"/>
<!-- 2 eye -->
<path d="M721 37.3 Q728 31 735 37.3 Q728 43.5 721 37.3Z" fill="url(#eyeg)" stroke="#3a5a64" stroke-width="1.3"/><circle cx="728" cy="37.3" r="2.2" fill="#3a5a64"/>
<!-- 3 refresh -->
<path d="M755 37 A5.5 5.5 0 1 1 752.5 32.3" fill="none" stroke="#5a8a98" stroke-width="2.2"/><path d="M750 30.5 L756.5 30.8 L755.5 36.5Z" fill="#3a6070"/>
<!-- 4 dashed eye -->
<rect x="764" y="31" width="14.5" height="12" rx="3" fill="none" stroke="#2a3e48" stroke-width="1.2" stroke-dasharray="2 1.2"/><path d="M766.5 37 Q771 33.5 775.5 37 Q771 40.5 766.5 37Z" fill="#fff" stroke="#3a5a64" stroke-width="1"/><circle cx="771" cy="37" r="1.3" fill="#3a5a64"/>
<path d="M783.5 36 H788.5 L786 40Z" fill="#111"/>
<!-- 6 zoom in -->
<circle cx="806.5" cy="35.5" r="5" fill="#eef6f8" stroke="#3a6270" stroke-width="1.8"/><path d="M810 39 L814 43" stroke="#2a4a58" stroke-width="2.4"/><path d="M806.5 32.5 V38.5 M803.5 35.5 H809.5" stroke="#2a4a58" stroke-width="1.1"/>
<!-- 7 zoom out -->
<circle cx="828.5" cy="35.5" r="5" fill="#eef6f8" stroke="#3a6270" stroke-width="1.8"/><path d="M832 39 L836 43" stroke="#2a4a58" stroke-width="2.4"/><path d="M825.5 35.5 H831.5" stroke="#2a4a58" stroke-width="1.1"/>
<!-- 8 zoom box -->
<rect x="844" y="35.5" width="8" height="7" fill="none" stroke="#2a4048" stroke-width="1" stroke-dasharray="1.5 1"/><circle cx="853.5" cy="35" r="4.8" fill="rgba(230,240,244,.6)" stroke="#7a9aa4" stroke-width="1.4"/><path d="M857 38.5 L860.5 42.5" stroke="#7a9aa4" stroke-width="2"/><path d="M853.5 32 V38 M850.5 35 H856.5" stroke="#4a6a74" stroke-width="1"/>
<!-- 9 zoom extents -->
<rect x="870.5" y="32.5" width="8" height="8" fill="none" stroke="#3a8aa8" stroke-width="1" stroke-dasharray="1 1"/><rect x="872.5" y="34.5" width="4" height="4" fill="#a0e8f8" stroke="#2a9ac0" stroke-width="1"/><path d="M874.5 29 L872.5 31 H876.5Z M874.5 44 L872.5 42 H876.5Z M867 36.5 L869 34.5 V38.5Z M882 36.5 L880 34.5 V38.5Z" fill="#2a9ac0"/>
<!-- 10 zoom all -->
<rect x="889.5" y="29.5" width="14" height="14" fill="#e0eef2" stroke="#6a8a98" stroke-width="1"/><path d="M896.5 31 L894 33.5 H899Z M896.5 42 L894 39.5 H899Z M891 36.5 L893.5 34 V39Z M902 36.5 L899.5 34 V39Z" fill="#18a8d0"/><path d="M896.5 33 V40 M893 36.5 H900" stroke="#18a8d0" stroke-width="1.3"/>
<!-- 11 axes -->
<path d="M922.5 43 V31" stroke="#1a70e0" stroke-width="1.2"/><path d="M920.5 33 L922.5 30 L924.5 33Z" fill="#1a70e0"/><path d="M922.5 43 L916.5 37" stroke="#20c020" stroke-width="1.2"/><path d="M916 39.5 L916 36.5 L919 36.5Z" fill="#20c020"/><path d="M922.5 43 L932 38" stroke="#f04010" stroke-width="1.2"/><path d="M929.5 37 L932.5 37.5 L931 40Z" fill="#f04010"/>
<path d="M935 36.5 H940 L937.5 40Z" fill="#111"/>
<!-- 12 xy -->
<path d="M948 43 V31" stroke="#20c020" stroke-width="1.2"/><path d="M946.5 33 L948 30 L949.5 33Z" fill="#20c020"/><path d="M948 42.5 H960" stroke="#f04010" stroke-width="1.2"/><path d="M958.5 41 L961 42.5 L958.5 44Z" fill="#f04010"/><text x="950" y="39.5" font-family="Liberation Sans" font-size="9.5" fill="#8aa0ac">xy</text>
<path d="M970 43 V31" stroke="#1a70e0" stroke-width="1.2"/><path d="M968.5 33 L970 30 L971.5 33Z" fill="#1a70e0"/><path d="M970 42.5 H982" stroke="#20c020" stroke-width="1.2"/><path d="M980.5 41 L983 42.5 L980.5 44Z" fill="#20c020"/><text x="972" y="39.5" font-family="Liberation Sans" font-size="9.5" fill="#8aa0ac">yz</text>
<path d="M992 43 V31" stroke="#f04010" stroke-width="1.2"/><path d="M990.5 33 L992 30 L993.5 33Z" fill="#f04010"/><path d="M992 42.5 H1004" stroke="#1a70e0" stroke-width="1.2"/><path d="M1002.5 41 L1005 42.5 L1002.5 44Z" fill="#1a70e0"/><text x="994" y="39.5" font-family="Liberation Sans" font-size="9.5" fill="#8aa0ac">zx</text>
<!-- 15..20 selection mode icons -->
<path d="M1019 37 Q1019 31.5 1026 31.5 L1030 31.5 Q1034.5 31.5 1034.5 36 Q1034.5 42 1028 42 L1024 42 Q1019 42 1019 37Z" fill="#f4f8fa" stroke="#5a7a88" stroke-width="1"/><rect x="1025" y="35.5" width="8" height="6.5" fill="#fff" stroke="#222" stroke-width="0.9" stroke-dasharray="1.2 1"/><rect x="1027" y="37.5" width="4" height="2.5" fill="#20b8f0"/>
<path d="M1040 35.5 Q1040 32 1045 32 L1050 32 Q1054 32 1053 35 Z" fill="#e8eef0" stroke="#c0d0d4" stroke-width="1"/><ellipse cx="1048.5" cy="39.5" rx="7" ry="3.5" fill="#c8f0f8" stroke="#30c0e0" stroke-width="1.3"/>
<path d="M1063 37 Q1063 32 1069 32 L1074 32 Q1078 32 1078 36 Q1078 42 1072 42 L1068 42 Q1063 42 1063 37Z" fill="url(#eyeg)" stroke="#3a5a64" stroke-width="1.2"/>
<path d="M1085 37 Q1085 32 1091 32 L1096 32 Q1100 32 1100 36 Q1100 42 1094 42 L1090 42 Q1085 42 1085 37Z" fill="#f0f4f6" stroke="#7a8a94" stroke-width="1"/><ellipse cx="1089" cy="37.5" rx="3" ry="4.5" fill="none" stroke="#7a8a94" stroke-width="0.8"/><rect x="1090.5" y="33.5" width="5" height="7" fill="#10c0f8"/>
<path d="M1107 37 Q1107 32 1113 32 L1118 32 Q1122 32 1122 36 Q1122 42 1116 42 L1112 42 Q1107 42 1107 37Z" fill="#f0f4f6" stroke="#7a8a94" stroke-width="1"/><ellipse cx="1111" cy="37.5" rx="3" ry="4.5" fill="none" stroke="#7a8a94" stroke-width="0.8"/><path d="M1114 32 V42" stroke="#10c0f8" stroke-width="1.8"/>
<path d="M1129 37 Q1129 32 1135 32 L1140 32 Q1144 32 1144 36 Q1144 42 1138 42 L1134 42 Q1129 42 1129 37Z" fill="#f0f4f6" stroke="#7a8a94" stroke-width="1"/><ellipse cx="1133" cy="37.5" rx="3" ry="4.5" fill="none" stroke="#7a8a94" stroke-width="0.8"/><rect x="1134" y="35" width="3.5" height="3.5" fill="#10a0f0"/><path d="M1136 32 V42 M1130 37 H1143" stroke="#7a8a94" stroke-width="0.6"/>
<!-- 21 funnel (pressed) -->
<rect x="1154" y="27" width="19.5" height="20" fill="#c8e0ec"/><ellipse cx="1163.5" cy="37" rx="7" ry="7" fill="#e8f6fc" opacity="0.9"/><path d="M1157 30 L1166 33 L1162 38 L1161.5 44.5 L1159.5 43.5 L1159.5 37.5Z" fill="#3a5a68"/><circle cx="1166.5" cy="40" r="2.5" fill="#e8f8fc" stroke="#4a7a8a" stroke-width="0.7"/>
<!-- 22 cube light -->
<path d="M1180 33 L1183 31.5 L1193 31.5 L1193 41 L1190 43 L1180 43Z" fill="#eef2f4" stroke="#d0d8dc" stroke-width="1"/><path d="M1180 33 L1190 33 L1193 31.5 M1190 33 V43" stroke="#d0d8dc" stroke-width="1" fill="none"/>
<!-- 23 wireframe -->
<path d="M1201 34 L1204 31.5 L1215 31.5 L1215 41 L1212 43.5 L1201 43.5Z M1201 34 H1212 L1215 31.5 M1212 34 V43.5 M1204 31.5 V40.5 H1215 M1204 40.5 L1201 43.5" fill="none" stroke="#56646c" stroke-width="0.9"/>
<!-- 24 camera -->
<rect x="1228" y="33.5" width="16.5" height="10" rx="1" fill="#56646c" stroke="#2e3a40" stroke-width="0.8"/><rect x="1232" y="31" width="7.5" height="3" fill="#6a7880" stroke="#2e3a40" stroke-width="0.6"/><circle cx="1236.2" cy="38.5" r="3.6" fill="#b8c4ca" stroke="#2a3a44" stroke-width="1"/><circle cx="1236.2" cy="38.5" r="1.6" fill="#3a4a54"/><rect x="1229.5" y="35" width="2" height="1" fill="#c8d0d4"/>
</svg>

<!-- viewport -->
<div class="a" style="left:693px;top:49px;width:2px;height:588px;background:#ece9e9"></div>
<div class="a" style="left:695px;top:49px;width:676px;height:1px;background:#fff"></div>
<div class="a" style="left:1371px;top:49px;width:2px;height:588px;background:#e8e8e8"></div>
<svg class="a" style="left:695px;top:50px" width="676" height="585" viewBox="695 50 676 585">
<defs><linearGradient id="vpg" x1="0" y1="0" x2="0" y2="1"><stop offset="0" stop-color="#7dc6e9"/><stop offset="1" stop-color="#cbe9f6"/></linearGradient></defs>
<rect x="695" y="50" width="676" height="585" fill="url(#vpg)"/>
<!-- COMSOL logo -->
<g fill="#d4eefa" opacity="0.85" font-family="Liberation Sans">
<text x="1299.7" y="65.8" font-size="6.6" textLength="37" lengthAdjust="spacingAndGlyphs">COMSOL</text>
<text x="1273.6" y="73" font-size="6.6" textLength="63.7" lengthAdjust="spacingAndGlyphs">MULTIPHYSICS</text>
</g>
<path d="M1342.5 62.5 L1352 60.2 L1356.2 62 L1355.5 71.5 L1347 74.2 L1343 72Z" fill="#c4e6f6" opacity="0.75" stroke="#e8f6fc" stroke-width="0.7"/>
<path d="M1344.8 64.5 Q1347.5 62.8 1349.5 65.5 Q1351 68.5 1349 70.5" fill="none" stroke="#3a90d0" stroke-width="1.5" opacity="0.8"/><path d="M1350.5 63.5 Q1354 65 1353 69" fill="none" stroke="#4aa0dc" stroke-width="1.2" opacity="0.7"/>
<!-- stripes (wp1 edge) -->
<g stroke="#6e6e6e" stroke-width="0.8" fill="none">
<path d="M768 203 L1063 77"/><path d="M768.5 205 L1063.3 79"/><path d="M769 207 L1063.5 81"/><path d="M769.5 209.5 L1063.8 83"/><path d="M770 211.5 L1064 85"/>
<path d="M796 191 L799 198.5 M915.5 140.5 L918.5 147.5 M1032.5 90 L1035.5 97.5"/>
</g>
<!-- right strip (wp2 edge) -->
<path d="M1081.5 82 L1317.5 437" stroke="#939c9f" stroke-width="4.2"/>
<path d="M1080.5 83 L1316 438" stroke="#7e8284" stroke-width="0.6"/><path d="M1082.5 82 L1318.5 437" stroke="#7e8284" stroke-width="0.6"/>
<!-- axis lines -->
<g stroke="#7f8080" stroke-width="1" fill="none">
<path d="M807.5 218 L833 262"/>
<path d="M1043 117 L1070 162"/>
<path d="M975.5 513.5 L1017 585"/>
<path d="M1139.5 517.5 L1145.5 527.5"/>
<path d="M1227 398.5 L1273 468.5"/>
</g>
<!-- left plate -->
<polygon points="806.3,275.2 960,209.9 1098,456.2 944.3,521.5" fill="#888888"/>
<polygon points="806.3,275.2 944.3,521.5 945.3,526.1 806.8,278" fill="#222"/>
<polygon points="944.3,521.5 1098,456.2 1099,460.8 945.3,526.1" fill="#a9a9a9" stroke="#222" stroke-width="0.8"/>
<path d="M806.3 275.2 L960 209.9" stroke="#111" stroke-width="1"/>
<path d="M806.3 275.2 L944.8 523" stroke="#111" stroke-width="1.6"/>
<polygon points="897.4,368.5 944.2,347.9 958.6,372.1 911.3,393.2" fill="#977272" stroke="#ff1a1a" stroke-width="1"/>
<!-- right plate -->
<polygon points="1105.6,144.7 1261.1,378.8 1155.5,423.4 1000,189.3" fill="#888888"/>
<polygon points="1261.1,378.8 1261.6,383 1156,427.6 1155.5,423.4" fill="#a9a9a9" stroke="#222" stroke-width="0.8"/>
<path d="M1000 189.3 L1105.6 144.7 L1261.1 378.8" stroke="#111" stroke-width="1" fill="none"/>
<polygon points="1099.7,278.7 1143,259.3 1158.7,282.7 1115,302.5" fill="#977272" stroke="#ff1a1a" stroke-width="1"/>
<!-- big plate -->
<polygon points="996.2,118.2 1223.2,473.5 1062.6,546.8 848.2,181.8" fill="#888888"/>
<polygon points="848.2,181.8 1062.6,546.8 1063.5,551.5 848.6,184.5" fill="#222"/>
<polygon points="1062.6,546.8 1223.2,473.5 1224.1,478 1063.5,551.5" fill="#a9a9a9" stroke="#222" stroke-width="0.8"/>
<path d="M848.2 181.8 L996.2 118.2 L1223.2 473.5" stroke="#111" stroke-width="1" fill="none"/>
<path d="M848.2 181.8 L1063 549" stroke="#111" stroke-width="1.6"/>
<g stroke="#8a8a8a" stroke-width="0.8"><path d="M821.5 310.8 L824 311.6"/><path d="M875.5 406.6 L878 407.4"/><path d="M931 505 L933.5 505.8"/></g>
<!-- labels -->
<g font-family="Liberation Sans" font-size="9.6" fill="#000">
<text x="750.5" y="212.5">1</text><text x="752" y="221.5">-1</text>
<text x="911.5" y="518.8" letter-spacing="-0.3">-20</text>
<text x="1016.5" y="602.8" letter-spacing="-0.3">-20</text>
<text x="711.5" y="588">y</text><text x="720.5" y="590.5">z</text><text x="747.5" y="596.5">x</text>
</g>
<!-- triad -->
<path d="M725.5 603.5 L743 595.5" stroke="#ff1010" stroke-width="1.5"/><path d="M739.5 593 L746 595 L741.5 599.5Z" fill="#ff1010"/>
<path d="M725.5 603.5 L718.5 591.5" stroke="#10e010" stroke-width="1.5"/><path d="M716 594 L716.5 588.5 L721 591.5Z" fill="#10e010"/>
<path d="M725.5 603.5 L724 594" stroke="#1010ff" stroke-width="1.5"/><path d="M721.5 595.5 L723.5 591 L726.5 595Z" fill="#1010ff"/>
</svg>
<div class="line" style="left:693px;top:635px;width:680px;height:1px;background:#e8e8e8"></div>
<div class="line" style="left:693px;top:637px;width:680px;height:1px"></div>

<!-- messages panel -->
<svg class="a" style="left:688px;top:638px" width="685" height="42" viewBox="688 638 685 42">
<defs><linearGradient id="msg" gradientUnits="userSpaceOnUse" x1="0" y1="642" x2="0" y2="664"><stop offset="0" stop-color="#ffffff"/><stop offset="1" stop-color="#e8e8e8"/></linearGradient></defs>
<path d="M692.5 680 V648 Q692.5 641.5 699 641.5 H784 C792 641.5 795 644 801 651 C807 658 810 664 818 664 H1373 V680Z" fill="url(#msg)"/>
<path d="M692.5 680 V648 Q692.5 641.5 699 641.5 H784 C792 641.5 795 644 801 651 C807 658 810 664.5 818 664.5 H1373" fill="none" stroke="#9a9a9a" stroke-width="1"/>
<path d="M784 641.5 H1365 Q1372 641.5 1373 648" fill="none" stroke="#9a9a9a" stroke-width="1"/>
<path d="M874 641.5 Q880.5 641.5 880.5 647 V664" fill="none" stroke="#a4a4a4" stroke-width="1"/>
<path d="M922 641.5 Q928.5 641.5 928.5 647 V664" fill="none" stroke="#a4a4a4" stroke-width="1"/>
<rect x="693" y="665" width="680" height="15" fill="#e8e8e8"/>
<!-- envelope -->
<rect x="696.5" y="648.5" width="14" height="9.5" fill="#fff" stroke="#8ab0c8" stroke-width="1"/><path d="M697 649 L703.5 654.5 L710 649" fill="none" stroke="#9ab8cc" stroke-width="0.8"/>
<!-- close x -->
<path d="M777.5 649 L785 656.5 M785 649 L777.5 656.5" stroke="#111" stroke-width="3.2" stroke-linecap="square"/><path d="M777.5 649 L785 656.5 M785 649 L777.5 656.5" stroke="#fff" stroke-width="1.5" stroke-linecap="square"/>
<!-- progress icon -->
<rect x="810.5" y="650.5" width="15" height="5" fill="#e8eef2" stroke="#8aa0b0" stroke-width="1"/><rect x="811" y="651" width="8" height="4" fill="#90e040"/>
<!-- log icon -->
<rect x="886.5" y="647.5" width="14" height="12" fill="#f8fafc" stroke="#8ab0c8" stroke-width="1"/><g fill="#9ab" ><rect x="889" y="650" width="2" height="1"/><rect x="893" y="650" width="2" height="1"/><rect x="897" y="650" width="2" height="1"/><rect x="889" y="653" width="2" height="1"/><rect x="893" y="653" width="2" height="1"/><rect x="897" y="653" width="2" height="1"/><rect x="889" y="656" width="2" height="1"/><rect x="893" y="656" width="2" height="1"/><rect x="897" y="656" width="2" height="1"/></g>
<!-- broom -->
<rect x="705" y="668" width="2" height="6" fill="#8a6a40"/><path d="M701.5 680 Q702 675 706 674 Q710 675 710.5 680Z" fill="#f0b848"/>
</svg>
<div class="t" style="left:716px;top:645px">Messages</div>
<div class="t" style="left:832px;top:645px;letter-spacing:-0.5px">Progress</div>
<div class="t" style="left:905px;top:645px">Log</div>
<svg class="a" style="left:1339px;top:646px" width="11" height="5" viewBox="0 0 11 5"><rect x="0.75" y="0.75" width="9.5" height="3.5" fill="#fff" stroke="#111" stroke-width="1.5"/></svg><svg class="a" style="left:1357px;top:646px" width="11" height="11" viewBox="0 0 11 11"><rect x="0.75" y="0.75" width="9.5" height="9.5" fill="#fff" stroke="#111" stroke-width="1.5"/><rect x="2" y="2.2" width="7" height="1.1" fill="#111"/></svg>

</body></html>
